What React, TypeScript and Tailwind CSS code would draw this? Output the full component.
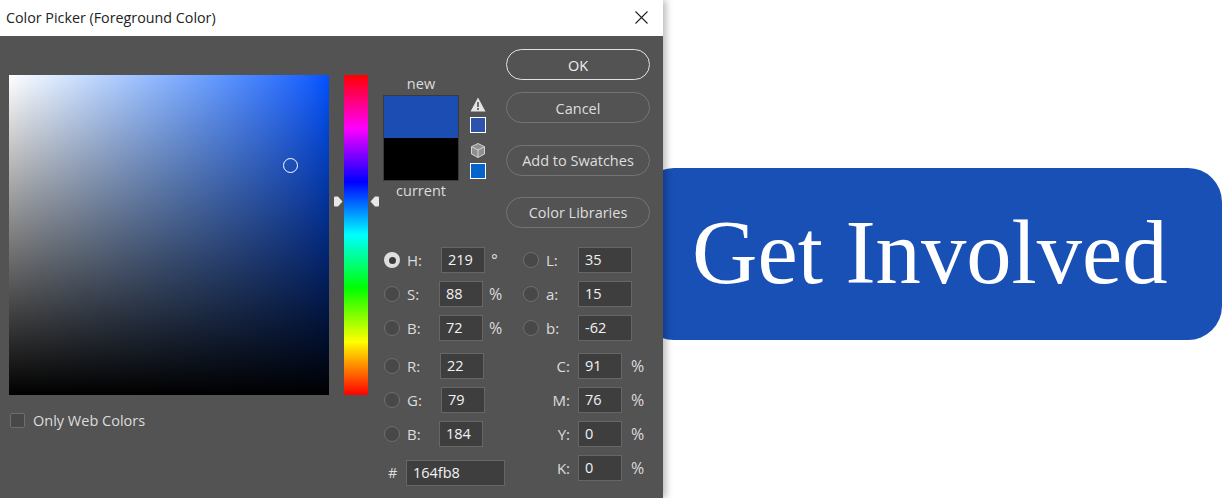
const uiFont = "font-['Open_Sans',sans-serif]";

const leftTop = [
  { name: "H:", value: "219", unit: "°", gap: "ml-[2px]", checked: true },
  { name: "S:", value: "88", unit: "%", gap: "ml-0" },
  { name: "B:", value: "72", unit: "%", gap: "ml-0" },
];
const leftBottom = [
  { name: "R:", value: "22", unit: "", gap: "ml-[1px]" },
  { name: "G:", value: "79", unit: "", gap: "ml-[2px]" },
  { name: "B:", value: "184", unit: "", gap: "ml-0" },
];
const lab = [
  { name: "L:", value: "35" },
  { name: "a:", value: "15" },
  { name: "b:", value: "-62" },
];
const cmyk = [
  { name: "C:", value: "91" },
  { name: "M:", value: "76" },
  { name: "Y:", value: "0" },
  { name: "K:", value: "0" },
];

function Radio({ checked = false }: { checked?: boolean }) {
  if (checked) {
    return (
      <span className="flex h-4 w-4 shrink-0 items-center justify-center rounded-full bg-[#dedede]">
        <span className="h-[7px] w-[7px] rounded-full bg-[#3a3a3a]" />
      </span>
    );
  }
  return <span className="h-4 w-4 shrink-0 rounded-full border border-[#6e6e6e] bg-[#484848]" />;
}

function Input({ value, width = "w-11", gap = "" }: { value: string; width?: string; gap?: string }) {
  return (
    <span
      className={`flex h-[26px] shrink-0 items-center border border-[#666666] bg-[#3e3e3e] pl-[6px] text-[14.5px] text-[#f2f2f2] ${width} ${gap}`}
    >
      {value}
    </span>
  );
}

function HsbRow({ name, value, unit, gap, checked }: { name: string; value: string; unit: string; gap: string; checked?: boolean }) {
  return (
    <div className="flex h-[26px] items-center pl-px">
      <Radio checked={checked} />
      <span className="ml-[7px] w-8 shrink-0 text-[15px]">{name}</span>
      <Input value={value} gap={gap} />
      <span className="ml-[6px] text-[16px]">{unit}</span>
    </div>
  );
}

function Button({ label, primary = false, className = "" }: { label: string; primary?: boolean; className?: string }) {
  return (
    <div
      className={`flex h-[31px] w-36 items-center justify-center rounded-full border ${
        primary ? "border-[#e2e2e2] text-[#f0f0f0]" : "border-[#757575] text-[#dedede]"
      } ${className}`}
    >
      {label}
    </div>
  );
}

function HueArrow({ flip = false }: { flip?: boolean }) {
  return (
    <svg width="10" height="11" viewBox="0 0 10 11" className={flip ? "rotate-180" : ""}>
      <path d="M1 1.5 Q1 .5 2 .5 H5 L9.5 5.5 L5 10.5 H2 Q1 10.5 1 9.5 Z" fill="#e8e8e8" />
    </svg>
  );
}

export default function App() {
  return (
    <div className={`flex h-[498px] w-[1224px] overflow-hidden bg-white ${uiFont}`}>
      {/* Dialog */}
      <div className="relative z-10 flex h-full w-[663px] shrink-0 flex-col shadow-[3px_0_7px_rgba(0,0,0,0.28)]">
        <div className="flex h-9 shrink-0 items-center justify-between bg-white pb-px pl-[6px] pr-[15px] text-[14.3px] text-[#222222]">
          <span>Color Picker (Foreground Color)</span>
          <svg width="13" height="13" viewBox="0 0 13 13" fill="none" stroke="#222222" strokeWidth="1.1">
            <path d="M.5.5l12 12M12.5.5l-12 12" />
          </svg>
        </div>

        <div className="flex flex-1 bg-[#535353] text-[14.5px] text-[#dcdcdc]">
          {/* Field and hue bar */}
          <div className="w-[383px] shrink-0 pl-[9px] pt-[39px]">
            <div className="flex gap-[15px]">
              <div className="relative h-80 w-80 bg-linear-to-r from-white to-[#0052ff]">
                <div className="absolute inset-0 bg-linear-to-b from-transparent to-black" />
                <div className="absolute left-[274px] top-[83px] h-[15px] w-[15px] rounded-full border border-white" />
              </div>
              <div className="relative h-80 w-6 bg-[linear-gradient(to_bottom,#ff0000_0%,#ff00ff_16.67%,#0000ff_33.33%,#00ffff_50%,#00ff00_66.67%,#ffff00_83.33%,#ff0000_100%)]">
                <div className="absolute -left-[11px] top-[121px]">
                  <HueArrow />
                </div>
                <div className="absolute -right-[12px] top-[121px]">
                  <HueArrow flip />
                </div>
              </div>
            </div>
            <div className="ml-px mt-[15px] flex items-center">
              <span className="h-[15px] w-[15px] rounded-[2px] border border-[#6e6e6e] bg-[#484848]" />
              <span className="ml-2">Only Web Colors</span>
            </div>
          </div>

          {/* Controls */}
          <div className="flex-1">
            <div className="flex h-[211px]">
              <div className="mt-[38px] w-[76px] text-center">
                <div className="h-5 leading-5">new</div>
                <div className="mt-px flex h-[86px] flex-col border border-[#3a3a3a]">
                  <div className="h-[42px] bg-[#1b4db3]" />
                  <div className="flex-1 bg-black" />
                </div>
                <div className="h-5 leading-5">current</div>
              </div>

              <div className="ml-[11px] w-4 pt-[61px]">
                <svg width="16" height="15" viewBox="0 0 16 15" className="block">
                  <path d="M8 .5L15.5 14.5H.5Z" fill="#e4e4e4" />
                  <path d="M7.2 5h1.6v5H7.2zM7.2 11h1.6v2H7.2z" fill="#535353" />
                </svg>
                <div className="mt-[5px] h-4 w-4 border border-white bg-[#2d52ac]" />
                <svg width="16" height="15" viewBox="0 0 16 15" className="mt-[10px] block">
                  <path d="M8 .5L14.5 3.7V11L8 14.5L1.5 11V3.7Z" fill="#8f8f8f" stroke="#d4d4d4" />
                  <path d="M1.5 3.7L8 7L14.5 3.7M8 7V14.5" fill="none" stroke="#d4d4d4" />
                </svg>
                <div className="mt-[5px] h-4 w-4 border border-white bg-[#0564cc]" />
              </div>

              <div className="ml-5 pt-[13px]">
                <Button label="OK" primary className="pt-[2px]" />
                <Button label="Cancel" className="mt-3 pt-[2px]" />
                <Button label="Add to Swatches" className="mt-[22px] pt-px" />
                <Button label="Color Libraries" className="mt-[21px] pt-px" />
              </div>
            </div>

            <div className="flex">
              <div className="w-[140px] shrink-0">
                <div className="flex flex-col gap-2">
                  {leftTop.map((r) => (
                    <HsbRow key={r.name} {...r} />
                  ))}
                </div>
                <div className="mt-3 flex flex-col gap-2">
                  {leftBottom.map((r) => (
                    <HsbRow key={r.name} {...r} />
                  ))}
                </div>
                <div className="mt-[13px] flex h-[26px] items-center pl-[5px]">
                  <span className="w-[18px] shrink-0">#</span>
                  <Input value="164fb8" width="w-[99px]" />
                </div>
              </div>

              <div>
                <div className="flex flex-col gap-2">
                  {lab.map((r) => (
                    <div key={r.name} className="flex h-[26px] items-center">
                      <Radio />
                      <span className="ml-[7px] w-8 shrink-0 text-[15px]">{r.name}</span>
                      <Input value={r.value} width="w-[54px]" />
                    </div>
                  ))}
                </div>
                <div className="mt-3 flex flex-col gap-2">
                  {cmyk.map((r) => (
                    <div key={r.name} className="flex h-[26px] items-center">
                      <span className="w-[55px] shrink-0 pr-[8px] text-right text-[15px]">{r.name}</span>
                      <Input value={r.value} />
                      <span className="ml-[9px] text-[16px]">%</span>
                    </div>
                  ))}
                </div>
              </div>
            </div>
          </div>
        </div>
      </div>

      {/* Button sample behind the dialog */}
      <div className="-ml-[23px] mt-[168px] flex h-[172px] w-[582px] shrink-0 items-center rounded-[34px] bg-[#1850b5] pb-[2px] pl-[52px] font-['Liberation_Serif',serif] text-[90.6px] leading-none text-white">
        Get Involved
      </div>
    </div>
  );
}
